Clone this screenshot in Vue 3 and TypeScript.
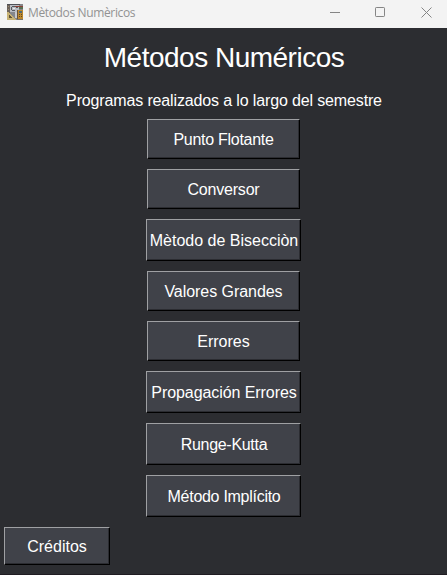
<script setup lang="ts">
interface Program {
  label: string
  tracking: string
  large?: boolean
}

const programs: Program[] = [
  { label: 'Punto Flotante', tracking: '-0.28px' },
  { label: 'Conversor', tracking: '-0.2px' },
  { label: 'Mètodo de Bisecciòn', tracking: '0px', large: true },
  { label: 'Valores Grandes', tracking: '-0.05px' },
  { label: 'Errores', tracking: '0px' },
  { label: 'Propagación Errores', tracking: '-0.07px', large: true },
  { label: 'Runge-Kutta', tracking: '-0.3px', large: true },
  { label: 'Método Implícito', tracking: '-0.28px', large: true },
]
</script>

<template>
  <div class="window">
    <header class="titlebar">
      <svg class="app-icon" width="16" height="16" viewBox="0 0 16 16" shape-rendering="crispEdges">
        <rect width="16" height="16" fill="#85868a" />
        <path d="M0 0h3v9H0z" fill="#6c625a" />
        <path d="M3 1h9v7H3z" fill="#b9bcc2" />
        <path d="M0 0h13v1H0z" fill="#4e4f55" />
        <path d="M1 2h1v1H1zM1 5h1v1H1z" fill="#9a8a70" />
        <path d="M4 3h1v3H4zM5 2h3v1H5zM5 6h3v1H5zM9 3h2v1H9z" fill="#55585f" />
        <path d="M6 4h2v1H6z" fill="#e6e8eb" />
        <path d="M8 2h8v1H8z" fill="#8b4136" />
        <path d="M12 3h4v2h-4z" fill="#587052" />
        <path d="M8 8h3v6H8z" fill="#c6c7cb" />
        <path d="M0 8h2v1h1v1h1v1h1v1h1v1h1v1h1v1h1v1H0z" fill="#c7b274" />
        <path d="M2 11h1v1h1v1h1v1H2z" fill="#5e5034" />
        <path d="M10 6h1v9h-1z" fill="#6d5433" />
        <path d="M11 6h5v9h-5z" fill="#ba872d" />
        <path d="M12 7h3v2h-3z" fill="#4f6974" />
        <path d="M12 10h1v1h-1zM14 10h1v1h-1zM12 12h1v1h-1zM14 12h1v1h-1z" fill="#5d4527" />
        <path d="M10 15h6v1h-6z" fill="#77716a" />
      </svg>
      <span class="caption">Mètodos Numèricos</span>
      <div class="controls">
        <button class="control" aria-label="Minimizar">
          <svg width="11" height="11" viewBox="0 0 11 11"><path d="M0 5.5h10" /></svg>
        </button>
        <button class="control" aria-label="Maximizar">
          <svg width="11" height="11" viewBox="0 0 11 11"><rect x="0.5" y="0.5" width="9" height="9" rx="0.7" /></svg>
        </button>
        <button class="control" aria-label="Cerrar">
          <svg width="11" height="11" viewBox="0 0 11 11"><path d="M0.5 0.5l10 10M10.5 0.5l-10 10" /></svg>
        </button>
      </div>
    </header>
    <main class="content">
      <h1>Métodos Numéricos</h1>
      <p>Programas realizados a lo largo del semestre</p>
      <nav class="programs">
        <button
          v-for="program in programs"
          :key="program.label"
          class="tk-button"
          :class="{ large: program.large }"
          :style="{ letterSpacing: program.tracking }"
        >
          {{ program.label }}
        </button>
      </nav>
      <button class="tk-button credits">Créditos</button>
    </main>
  </div>
</template>

<style>
body {
  margin: 0;
  background: #2c2d31;
}
</style>

<style scoped>
.window {
  box-sizing: border-box;
  width: 447px;
  height: 575px;
  display: flex;
  flex-direction: column;
  overflow: hidden;
  background: #2c2d31;
  border-bottom: 1px solid #1f1c22;
  color: #fff;
  font-family: "Liberation Sans", Arial, sans-serif;
}
.titlebar {
  box-sizing: border-box;
  flex: none;
  height: 28px;
  padding-left: 7px;
  display: flex;
  align-items: center;
  background: #f3f3f3;
  color: #929292;
}
.app-icon {
  flex: none;
  margin-top: -4px;
}
.caption {
  margin: -3px 0 0 5px;
  font: 12px/16px "Open Sans", "Noto Sans", sans-serif;
  letter-spacing: -0.36px;
  white-space: nowrap;
}
.controls {
  display: flex;
  margin-left: auto;
  margin-right: -2px;
  align-self: stretch;
}
.control {
  box-sizing: border-box;
  width: 45.5px;
  height: 25px;
  padding: 0;
  border: 0;
  background: none;
  display: flex;
  align-items: center;
  justify-content: center;
}
.control svg {
  fill: none;
  stroke: #858585;
  stroke-width: 1;
}
.content {
  flex: 1;
  display: flex;
  flex-direction: column;
  align-items: center;
}
h1 {
  margin: 14px 0 0 1px;
  font-size: 28px;
  line-height: 32px;
  letter-spacing: -0.5px;
  font-weight: 400;
  white-space: nowrap;
}
p {
  margin: 18px 0 0 1px;
  font-size: 16px;
  line-height: 18px;
  letter-spacing: -0.14px;
  white-space: nowrap;
}
.programs {
  margin-top: 9px;
  display: flex;
  flex-direction: column;
  align-items: center;
  gap: 10px;
}
.tk-button {
  box-sizing: border-box;
  width: 153px;
  height: 40px;
  padding: 2px 0 0;
  border: 1px solid;
  border-color: #9fa0a3 #000 #000 #9fa0a3;
  border-radius: 0;
  background: #404249;
  box-shadow: inset -1px -1px #2b2c31;
  color: #fff;
  font: 16px/18px "Liberation Sans", Arial, sans-serif;
  white-space: nowrap;
}
.tk-button.large {
  width: 155px;
  height: 42px;
  padding-left: 1px;
}
.tk-button.credits {
  align-self: flex-start;
  width: 106px;
  height: 38px;
  margin: 10px 0 0 4px;
}
</style>
